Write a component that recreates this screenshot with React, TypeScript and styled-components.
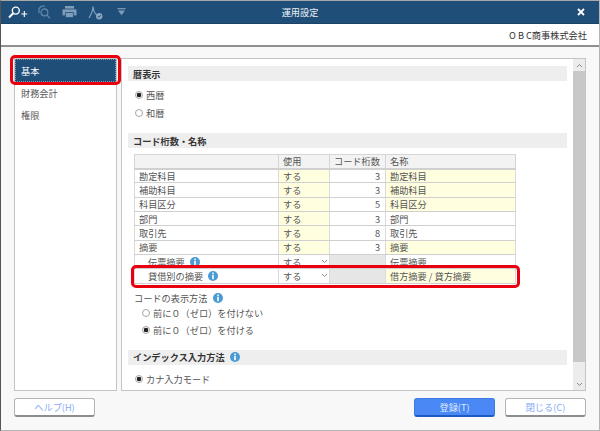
import styled, { createGlobalStyle } from "styled-components"

const GlobalStyle = createGlobalStyle`
  html, body {
    margin: 0;
    padding: 0;
    background: #b9b9b9;
  }
  * {
    box-sizing: border-box;
  }
  body {
    font-family: "Noto Sans CJK JP", "Noto Sans", sans-serif;
    font-size: 9.2px;
    color: #444;
  }
`

const Window = styled.div`
  width: 600px;
  height: 431px;
  border-left: 1px solid #555;
  border-top: 1px solid #a8a8a8;
  border-right: 1px solid #b5b5b5;
  border-bottom: 1px solid #b5b5b5;
  display: flex;
  flex-direction: column;
  background: #f8f8f8;
`

const TitleBar = styled.div`
  height: 23px;
  flex: none;
  background: #1f4e79;
  border-bottom: 1px solid #1a4366;
  display: grid;
  grid-template-columns: 1fr auto 1fr;
  align-items: center;
  color: #fff;
  padding: 0 14px;
`

const Toolbar = styled.div`
  display: flex;
  align-items: center;
  gap: 10px;
  margin-left: -7px;
`

const Title = styled.div`
  font-size: 9.2px;
  color: #e8eef4;
`

const CloseBox = styled.div`
  justify-self: end;
  display: flex;
`

const CompanyBar = styled.div`
  height: 23px;
  flex: none;
  background: #fff;
  border-bottom: 2px solid #8f8f8f;
  display: flex;
  align-items: center;
  justify-content: flex-end;
  padding: 0 12px 0 0;
  font-size: 9.2px;
  color: #333;
`

const Body = styled.div`
  flex: 1;
  display: flex;
  flex-direction: column;
  padding: 11px 13px 11px 13px;
`

const Main = styled.div`
  display: flex;
  gap: 4px;
  height: 333px;
`

const Nav = styled.div`
  width: 103px;
  flex: none;
  background: #fff;
  border: 1px solid #c4c4c4;
  display: flex;
  flex-direction: column;
`

const NavItem = styled.div<{ $selected?: boolean }>`
  position: relative;
  height: ${(p) => (p.$selected ? "23px" : "21px")};
  margin-bottom: ${(p) => (p.$selected ? "0" : "1px")};
  padding-left: 6px;
  display: flex;
  align-items: center;
  font-size: 9.2px;
  color: ${(p) => (p.$selected ? "#fff" : "#555")};
  background: ${(p) => (p.$selected ? "#1f4e79" : "transparent")};
  outline: ${(p) => (p.$selected ? "1px dotted #7f9ab3" : "none")};
  outline-offset: -1px;
`

const RedFrame = styled.div<{ $inset: string; $height?: number }>`
  position: absolute;
  inset: ${(p) => p.$inset};
  ${(p) => (p.$height ? `height: ${p.$height}px;` : "")}
  border: 3px solid #e8000f;
  border-radius: 5px;
  pointer-events: none;
`

const Panel = styled.div`
  flex: 1;
  background: #fff;
  border: 1px solid #c4c4c4;
  display: flex;
  min-width: 0;
`

const PanelContent = styled.div`
  flex: 1;
  min-width: 0;
  padding: 7px 6px 0 6px;
  display: flex;
  flex-direction: column;
`

const Scrollbar = styled.div`
  width: 12px;
  flex: none;
  background: #ececec;
  display: flex;
  flex-direction: column;
  justify-content: space-between;
`

const ScrollTrack = styled.div`
  display: flex;
  flex-direction: column;
`

const ScrollArrow = styled.div`
  height: 12px;
  flex: none;
  display: flex;
  align-items: center;
  justify-content: center;
`

const ScrollThumb = styled.div`
  height: 291px;
  flex: none;
  background: #c8c8c8;
`

const SectionBar = styled.div<{ $top?: number; $bottom?: number }>`
  height: 15px;
  flex: none;
  background: #eeeeee;
  display: flex;
  align-items: center;
  gap: 5px;
  padding-left: 5px;
  margin-top: ${(p) => p.$top ?? 0}px;
  margin-bottom: ${(p) => p.$bottom ?? 0}px;
  font-size: 9.2px;
  font-weight: 700;
  color: #333;
`

const RadioRow = styled.div<{ $indent?: number; $height?: number }>`
  height: ${(p) => p.$height ?? 18}px;
  flex: none;
  display: flex;
  align-items: center;
  gap: 3px;
  padding-left: ${(p) => p.$indent ?? 7}px;
  font-size: 9.2px;
  color: #555;
`

const RadioDot = styled.span<{ $on?: boolean }>`
  width: 8px;
  height: 8px;
  flex: none;
  border-radius: 50%;
  border: 1px solid #a6a6a6;
  background: ${(p) => (p.$on ? "radial-gradient(circle at center, #222 0 2px, #fff 2.6px)" : "#fff")};
`

const TableWrap = styled.div`
  position: relative;
  width: 381px;
  margin: 6px 0 0 6px;
`

const Table = styled.table`
  width: 381px;
  table-layout: fixed;
  border-collapse: collapse;
  font-size: 9.2px;
  color: #555;
`

const Th = styled.th<{ $w: number }>`
  width: ${(p) => p.$w}px;
  height: 14px;
  padding: 0 0 0 4px;
  background: #f3f3f3;
  border: 1px solid #d6d6d6;
  border-bottom: 2px solid #d0d0d0;
  font-weight: 400;
  text-align: left;
  line-height: 12px;
  white-space: nowrap;
  overflow: hidden;
`

const Td = styled.td<{ $fill?: boolean; $gray?: boolean; $num?: boolean; $indent?: boolean }>`
  height: 14.33px;
  padding: 0 ${(p) => (p.$num ? "5px" : "0")} 0 ${(p) => (p.$indent ? "13px" : "4px")};
  border: 1px solid #dadada;
  border-bottom: 1px solid #d0d0d0;
  line-height: 12px;
  text-align: ${(p) => (p.$num ? "right" : "left")};
  background: ${(p) => (p.$gray ? "#e6e6e6" : p.$fill ? "#ffffe0" : "#fff")};
  white-space: nowrap;
  overflow: hidden;
`

const CellFlex = styled.div`
  display: flex;
  align-items: center;
  justify-content: space-between;
  padding-right: 1px;
`

const LabelFlex = styled.div`
  display: flex;
  align-items: center;
  gap: 5px;
`

const SubHeading = styled.div`
  height: 14px;
  flex: none;
  margin-top: 7px;
  padding-left: 6px;
  display: flex;
  align-items: center;
  gap: 5px;
  font-size: 9.2px;
  color: #555;
`

const Footer = styled.div`
  display: flex;
  justify-content: space-between;
  margin-top: 7px;
`

const FooterRight = styled.div`
  display: flex;
  gap: 10px;
`

const Button = styled.div<{ $primary?: boolean }>`
  width: 81px;
  height: 19px;
  display: flex;
  align-items: center;
  justify-content: center;
  border-radius: 3px;
  font-size: 9.2px;
  background: ${(p) => (p.$primary ? "#4a88f5" : "#fff")};
  color: ${(p) => (p.$primary ? "#dfeaff" : "#86aaf5")};
  border: 1px solid ${(p) => (p.$primary ? "#3f7ae0" : "#b4b4b4")};
  border-bottom: 2px solid ${(p) => (p.$primary ? "#1d5ac4" : "#8c8c8c")};
`

const ToolIcon = styled.svg<{ $left?: number }>`
  margin-left: ${(p) => p.$left ?? 0}px;
  flex: none;
`

const InfoIcon = () => (
  <svg width="10" height="10" viewBox="0 0 10 10">
    <circle cx="5" cy="5" r="5" fill="#4a9ad4" />
    <rect x="4.2" y="1.6" width="1.6" height="1.5" fill="#fff" />
    <rect x="4.2" y="3.8" width="1.6" height="4.4" fill="#fff" />
  </svg>
)

const Chevron = ({ up }: { up?: boolean }) => (
  <svg width="7" height="5" viewBox="0 0 7 5">
    <path d={up ? "M1 4 L3.5 1.5 L6 4" : "M1 1 L3.5 3.5 L6 1"} fill="none" stroke="#8a8a8a" strokeWidth="1" />
  </svg>
)

const ToolIcons = () => (
  <Toolbar>
    <ToolIcon width="20" height="14" viewBox="0 0 20 14">
      <circle cx="7.8" cy="5.6" r="3.5" fill="none" stroke="#fff" strokeWidth="1.4" />
      <path d="M5.2 8.2 L1 12.5" stroke="#fff" strokeWidth="2" />
      <path d="M13.3 9 H19.3 M16.3 6 V12" stroke="#fff" strokeWidth="1.1" />
    </ToolIcon>
    <ToolIcon width="13" height="15" viewBox="0 0 13 15">
      <circle cx="6.4" cy="7.4" r="3.4" fill="none" stroke="#5e84a6" strokeWidth="1.3" />
      <path d="M7 1.2 H3.5 L1 3.6 V8 M9 10 L11.8 13.4" fill="none" stroke="#5e84a6" strokeWidth="1.3" />
    </ToolIcon>
    <ToolIcon $left={1} width="15" height="12" viewBox="0 0 15 12">
      <path d="M3 0 H12 V2.6 H3 Z" fill="#7f9db8" />
      <path d="M0.5 3.4 H14.5 V9.4 H0.5 Z" fill="#7f9db8" />
      <path d="M3.5 6.5 H11.5 V11.6 H3.5 Z" fill="#7f9db8" stroke="#1f4e79" strokeWidth="0.8" />
    </ToolIcon>
    <ToolIcon $left={1} width="15" height="15" viewBox="0 0 15 15">
      <path d="M1 13 C4 8 5 5 5 1.5 M5 1.5 C5.5 6 7 9 9 10" fill="none" stroke="#8aa6bf" strokeWidth="1.1" />
      <circle cx="11.2" cy="11.2" r="3.2" fill="#8aa6bf" />
      <path d="M9.8 11.2 L10.9 12.3 L12.7 10.2" fill="none" stroke="#1f4e79" strokeWidth="0.9" />
    </ToolIcon>
    <ToolIcon $left={4} width="9" height="8" viewBox="0 0 9 8">
      <path d="M0.5 0.7 H8.5" stroke="#7f9db8" strokeWidth="1.2" />
      <path d="M1 2.6 H8 L4.5 7.2 Z" fill="#7f9db8" />
    </ToolIcon>
  </Toolbar>
)

const rows = [
  { name: "勘定科目", digits: 3, label: "勘定科目", fill: true },
  { name: "補助科目", digits: 3, label: "補助科目", fill: true },
  { name: "科目区分", digits: 5, label: "科目区分", fill: true },
  { name: "部門", digits: 3, label: "部門", fill: false },
  { name: "取引先", digits: 8, label: "取引先", fill: false },
  { name: "摘要", digits: 3, label: "摘要", fill: true },
]

const App = () => {
  return (
    <>
      <GlobalStyle />
      <Window>
        <TitleBar>
          <ToolIcons />
          <Title>運用設定</Title>
          <CloseBox>
            <svg width="8" height="8" viewBox="0 0 8 8">
              <path d="M1 1 L7 7 M7 1 L1 7" stroke="#fff" strokeWidth="1.8" />
            </svg>
          </CloseBox>
        </TitleBar>
        <CompanyBar>O B C商事株式会社</CompanyBar>
        <Body>
          <Main>
            <Nav>
              <NavItem $selected>
                基本
                <RedFrame $inset="-4px -5px -3px -5px" />
              </NavItem>
              <NavItem>財務会計</NavItem>
              <NavItem>権限</NavItem>
            </Nav>
            <Panel>
              <PanelContent>
                <SectionBar $bottom={5}>暦表示</SectionBar>
                <RadioRow>
                  <RadioDot $on />
                  西暦
                </RadioRow>
                <RadioRow>
                  <RadioDot />
                  和暦
                </RadioRow>
                <SectionBar $top={11}>コード桁数・名称</SectionBar>
                <TableWrap>
                  <Table>
                    <thead>
                      <tr>
                        <Th $w={144} />
                        <Th $w={51}>使用</Th>
                        <Th $w={56}>コード桁数</Th>
                        <Th $w={130}>名称</Th>
                      </tr>
                    </thead>
                    <tbody>
                      {rows.map((row) => (
                        <tr key={row.name}>
                          <Td>{row.name}</Td>
                          <Td $fill>する</Td>
                          <Td $num>{row.digits}</Td>
                          <Td $fill={row.fill}>{row.label}</Td>
                        </tr>
                      ))}
                      <tr>
                        <Td $indent>
                          <LabelFlex>
                            伝票摘要
                            <InfoIcon />
                          </LabelFlex>
                        </Td>
                        <Td>
                          <CellFlex>
                            する
                            <Chevron />
                          </CellFlex>
                        </Td>
                        <Td $gray />
                        <Td>伝票摘要</Td>
                      </tr>
                      <tr>
                        <Td $indent>
                          <LabelFlex>
                            貸借別の摘要
                            <InfoIcon />
                          </LabelFlex>
                        </Td>
                        <Td>
                          <CellFlex>
                            する
                            <Chevron />
                          </CellFlex>
                        </Td>
                        <Td $gray />
                        <Td $fill>借方摘要 / 貸方摘要</Td>
                      </tr>
                    </tbody>
                  </Table>
                  <RedFrame $inset="auto -5px -4px -3px" $height={23} />
                </TableWrap>
                <SubHeading>
                  コードの表示方法
                  <InfoIcon />
                </SubHeading>
                <RadioRow $indent={14} $height={16}>
                  <RadioDot />
                  前に０（ゼロ）を付けない
                </RadioRow>
                <RadioRow $indent={14} $height={18}>
                  <RadioDot $on />
                  前に０（ゼロ）を付ける
                </RadioRow>
                <SectionBar $top={11} $bottom={5}>
                  インデックス入力方法
                  <InfoIcon />
                </SectionBar>
                <RadioRow>
                  <RadioDot $on />
                  カナ入力モード
                </RadioRow>
              </PanelContent>
              <Scrollbar>
                <ScrollTrack>
                  <ScrollArrow>
                    <Chevron up />
                  </ScrollArrow>
                  <ScrollThumb />
                </ScrollTrack>
                <ScrollArrow>
                  <Chevron />
                </ScrollArrow>
              </Scrollbar>
            </Panel>
          </Main>
          <Footer>
            <Button>ヘルプ(H)</Button>
            <FooterRight>
              <Button $primary>登録(T)</Button>
              <Button>閉じる(C)</Button>
            </FooterRight>
          </Footer>
        </Body>
      </Window>
    </>
  )
}

export default App
